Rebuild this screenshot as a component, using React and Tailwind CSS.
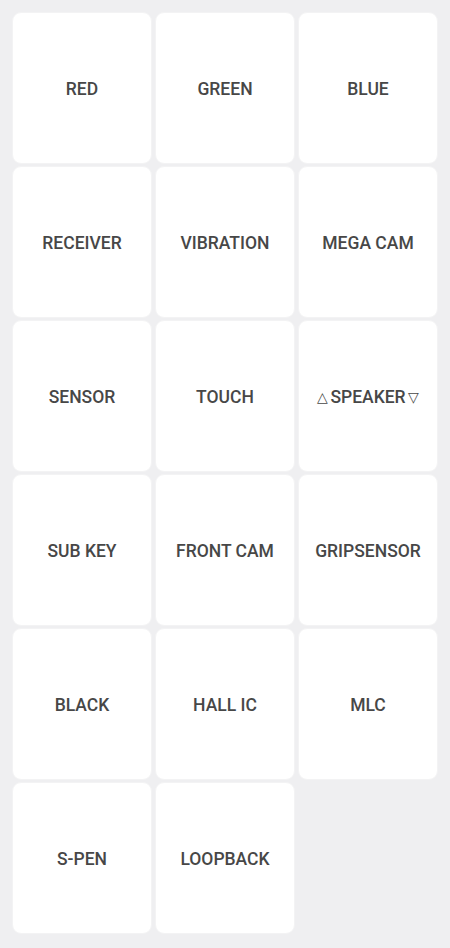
import React from "react";

const items = [
  "RED", "GREEN", "BLUE",
  "RECEIVER", "VIBRATION", "MEGA CAM",
  "SENSOR", "TOUCH", "△SPEAKER▽",
  "SUB KEY", "FRONT CAM", "GRIPSENSOR",
  "BLACK", "HALL IC", "MLC",
  "S-PEN", "LOOPBACK",
];

export default function App() {
  return (
    <div className="w-[450px] h-[948px] bg-[#efeff1] px-[12px] pt-[12px]" style={{ fontFamily: "Roboto, 'Liberation Sans', sans-serif" }}>
      <div className="grid grid-cols-[140px_140px_140px] gap-x-[3px] gap-y-[2px] auto-rows-[152px]">
        {items.map((t) => (
          <div
            key={t}
            className="bg-white rounded-[9px] border border-[#f3f3f4] flex items-center justify-center pt-[3px] text-[17.5px] font-medium text-[#474747]"
          >
            {t === "△SPEAKER▽" ? (
              <span className="flex items-center gap-[2px]">
                <span className="text-[14px] font-normal">△</span>
                <span>SPEAKER</span>
                <span className="text-[14px] font-normal">▽</span>
              </span>
            ) : (
              t
            )}
          </div>
        ))}
      </div>
    </div>
  );
}
